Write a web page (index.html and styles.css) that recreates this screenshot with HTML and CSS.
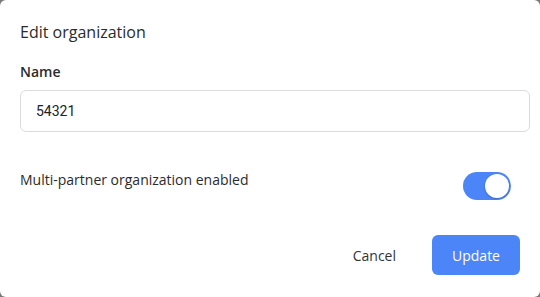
FILE: index.html
```html
<!DOCTYPE html>
<html>
<head>
<meta charset="utf-8">
<link rel="stylesheet" href="styles.css">
</head>
<body>
<div class="dialog">
  <h2 class="title">Edit organization</h2>
  <label class="label" for="name">Name</label>
  <input id="name" class="input" type="text" value="54321">
  <div class="toggle-row">
    <span class="toggle-label">Multi-partner organization enabled</span>
    <span class="toggle"><span class="knob"></span></span>
  </div>
  <div class="footer">
    <button class="btn btn-cancel">Cancel</button>
    <button class="btn btn-primary">Update</button>
  </div>
</div>
</body>
</html>
```
FILE: styles.css
```css
html, body {
  margin: 0;
  padding: 0;
  background: #7a7a7a;
}
.dialog {
  box-sizing: border-box;
  width: 540px;
  height: 297px;
  background: #fff;
  border-radius: 6px;
  padding: 20px 20px 22px 20px;
  display: flex;
  flex-direction: column;
  font-family: "Open Sans", sans-serif;
  color: #333;
}
.title {
  margin: 0;
  font-size: 16px;
  line-height: 24px;
  font-weight: 500;
  color: #2b2b2b;
}
.label {
  margin-top: 18px;
  font-size: 14px;
  line-height: 20px;
  font-weight: 600;
  color: #2b2b2b;
}
.input {
  margin-top: 8px;
  box-sizing: border-box;
  height: 42px;
  width: calc(100% + 10px);
  border: 1px solid #dcdcdc;
  border-radius: 6px;
  padding: 0 15px;
  font-family: Roboto, sans-serif;
  font-size: 14px;
  color: #222;
  outline: none;
}
.toggle-row {
  margin-top: 38px;
  display: flex;
  justify-content: space-between;
  align-items: flex-start;
  padding-right: 9px;
}
.toggle-label {
  font-size: 14px;
  line-height: 20px;
  color: #2b2b2b;
}
.toggle {
  margin-top: 2px;
  box-sizing: border-box;
  width: 48px;
  height: 28px;
  border-radius: 14px;
  background: #4c85f7;
  padding: 2px;
  display: flex;
  justify-content: flex-end;
}
.knob {
  width: 24px;
  height: 24px;
  border-radius: 50%;
  background: #fff;
  box-shadow: 0 1px 2px rgba(0,0,0,0.2);
}
.footer {
  margin-top: auto;
  display: flex;
  justify-content: flex-end;
  gap: 18px;
}
.btn {
  height: 40px;
  border: none;
  border-radius: 6px;
  font-family: "Open Sans", sans-serif;
  font-size: 14px;
  padding: 0 18px;
  cursor: pointer;
}
.btn-cancel {
  background: transparent;
  color: #333;
}
.btn-primary {
  background: #4c85f7;
  color: #fff;
  width: 88px;
  padding: 0;
  padding-top: 1px;
}
```
